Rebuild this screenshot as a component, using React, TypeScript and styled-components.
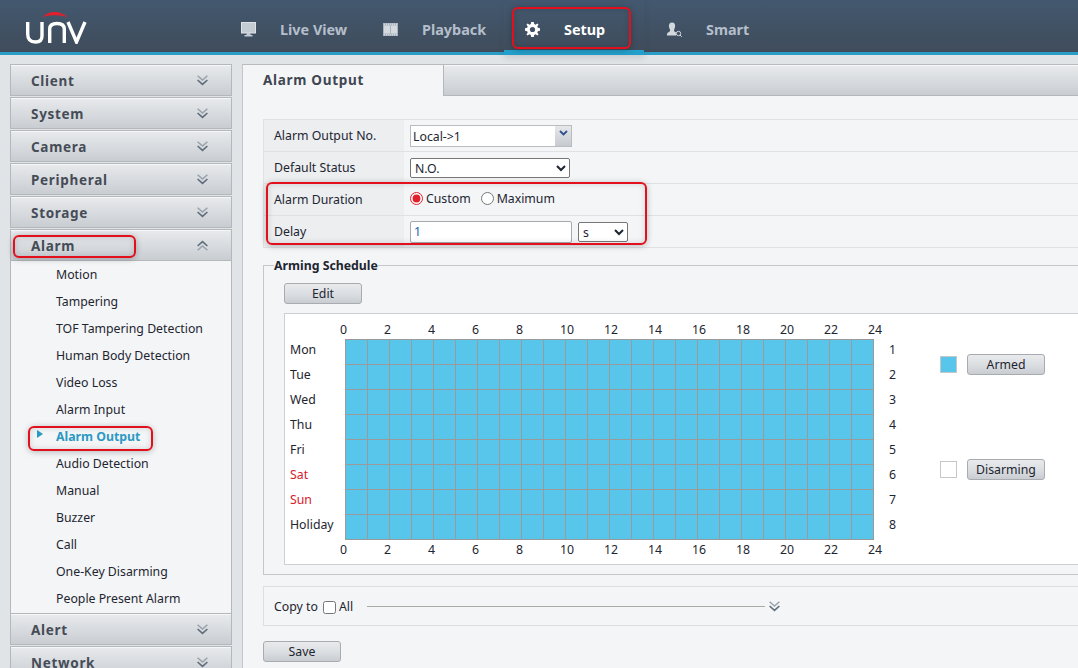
import React from "react";
import styled, { createGlobalStyle } from "styled-components";

const FONT = `"Noto Sans", "Open Sans", "Liberation Sans", sans-serif`;

const GlobalStyle = createGlobalStyle`
  html, body {
    margin: 0;
    padding: 0;
    height: 668px;
    overflow: hidden;
    background: #e1e4e7;
    font-family: ${FONT};
    font-size: 12.3px;
    color: #1d2530;
  }
  * { box-sizing: border-box; }
`;

const sections = ["Client", "System", "Camera", "Peripheral", "Storage"];
const alarmItems = [
  "Motion",
  "Tampering",
  "TOF Tampering Detection",
  "Human Body Detection",
  "Video Loss",
  "Alarm Input",
  "Alarm Output",
  "Audio Detection",
  "Manual",
  "Buzzer",
  "Call",
  "One-Key Disarming",
  "People Present Alarm",
];
const days = ["Mon", "Tue", "Wed", "Thu", "Fri", "Sat", "Sun", "Holiday"];
const hours = Array.from({ length: 13 }, (_, i) => i * 2);

const Logo = () => (
  <svg width="64" height="34" viewBox="0 0 64 34" fill="none">
    <path d="M17 7.500C23 0 36 0 43 7.500C36 4.500 23 4.500 17 7.500Z" fill="#e0202c" />
    <path d="M2.700 12V24C2.700 30 6 32 10.500 32C14.500 32 17 30.500 17 26V12" stroke="#fff" strokeWidth="3.400" />
    <path d="M24.700 33V19C24.700 15 28 13.500 32 13.500C36 13.500 39.300 15 39.300 19V33" stroke="#fff" strokeWidth="3.400" />
    <path d="M43 12L51.500 32L60 12" stroke="#fff" strokeWidth="3.400" />
  </svg>
);

const MonitorIcon = () => (
  <svg width="15" height="15" viewBox="0 0 15 15">
    <rect x="0.500" y="0.500" width="14" height="10.500" fill="#c3cbd3" stroke="#dfe3e7" />
    <rect x="5.500" y="11" width="4" height="2" fill="#c3cbd3" />
    <rect x="3.500" y="13" width="8" height="1.500" fill="#c3cbd3" />
  </svg>
);

const FilmIcon = () => (
  <svg width="15" height="13" viewBox="0 0 15 13">
    <rect width="15" height="13" fill="#aab4bf" />
    <rect x="1" y="2.500" width="6" height="8" fill="#d5dade" />
    <rect x="8" y="2.500" width="6" height="8" fill="#d5dade" />
    <path d="M1 1.200H14M1 11.800H14" stroke="#e3e6e9" strokeDasharray="1 1" />
  </svg>
);

const GearIcon = () => (
  <svg width="15" height="15" viewBox="0 0 15 15">
    <path
      d="M6.200 0H8.800L9.200 2.100L10.600 2.700L12.400 1.500L13.500 2.600L12.300 4.400L12.900 5.800L15 6.200V8.800L12.900 9.200L12.300 10.600L13.500 12.400L12.400 13.500L10.600 12.300L9.200 12.900L8.800 15H6.200L5.800 12.900L4.400 12.300L2.600 13.500L1.500 12.400L2.700 10.600L2.100 9.200L0 8.800V6.200L2.100 5.800L2.700 4.400L1.500 2.600L2.600 1.500L4.400 2.700L5.800 2.100Z"
      fill="#fff"
    />
    <circle cx="7.500" cy="7.500" r="2.600" fill="#425264" />
  </svg>
);

const SmartIcon = () => (
  <svg width="15" height="15" viewBox="0 0 15 15">
    <path d="M5 0.500C7.500 0.500 8.500 2.500 8 5C7.700 6.500 7 7.500 7 8.500C7 9.500 8.500 10 9 10.500V13.500H0V12C0 10.500 3 10 3.200 8.500C3.200 7.500 2.300 6.500 2 5C1.600 2.500 2.700 0.500 5 0.500Z" fill="#d3d8dd" />
    <circle cx="11.500" cy="11.500" r="2.200" fill="none" stroke="#d3d8dd" />
    <path d="M13 13L14.800 14.800" stroke="#d3d8dd" />
  </svg>
);

const Chevrons = ({ up }: { up?: boolean }) => (
  <svg width="11" height="11" viewBox="0 0 11 11" fill="none" style={{ transform: up ? "rotate(180deg)" : undefined }}>
    <path d="M0.600 0.800L5.500 5L10.400 0.800" stroke="#98a2ad" strokeWidth="1.500" />
    <path d="M0.600 5L5.500 9.400L10.400 5" stroke="#5f6c7a" strokeWidth="1.600" />
  </svg>
);

const App = () => {
  return (
    <Page>
      <GlobalStyle />
      <Header>
        <LogoBox>
          <Logo />
        </LogoBox>
        <Nav>
          <NavItem>
            <NavIcon>
              <MonitorIcon />
            </NavIcon>
            Live View
          </NavItem>
          <NavItem>
            <NavIcon>
              <FilmIcon />
            </NavIcon>
            Playback
          </NavItem>
          <NavItem $active>
            <NavIcon>
              <GearIcon />
            </NavIcon>
            Setup
          </NavItem>
          <NavItem>
            <NavIcon>
              <SmartIcon />
            </NavIcon>
            Smart
          </NavItem>
        </Nav>
      </Header>

      <Body>
        <Sidebar>
          {sections.map((s) => (
            <SideHead key={s}>
              {s}
              <Chevrons />
            </SideHead>
          ))}
          <SideHead $open>
            Alarm
            <Chevrons up />
          </SideHead>
          <SideList>
            {alarmItems.map((item) => (
              <SideItem key={item} $active={item === "Alarm Output"}>
                {item}
              </SideItem>
            ))}
          </SideList>
          <SideHead>
            Alert
            <Chevrons />
          </SideHead>
          <SideHead>
            Network
            <Chevrons />
          </SideHead>
        </Sidebar>

        <Main>
          <TabBar>
            <Tab>Alarm Output</Tab>
            <TabFill />
          </TabBar>

          <FormTable>
            <FormRow>
              <FormLabel>Alarm Output No.</FormLabel>
              <FormValue>
                <ComboBox>
                  <ComboText>Local-&gt;1</ComboText>
                  <ComboButton>
                    <svg width="9" height="6" viewBox="0 0 9 6">
                      <path d="M1 1L4.500 4.500L8 1" fill="none" stroke="#2f4f8f" strokeWidth="1.800" />
                    </svg>
                  </ComboButton>
                </ComboBox>
              </FormValue>
            </FormRow>
            <FormRow>
              <FormLabel>Default Status</FormLabel>
              <FormValue>
                <Select $width={160} defaultValue="N.O.">
                  <option>N.O.</option>
                  <option>N.C.</option>
                </Select>
              </FormValue>
            </FormRow>
            <FormRow>
              <FormLabel>Alarm Duration</FormLabel>
              <FormValue>
                <RadioLabel>
                  <Radio name="duration" defaultChecked />
                  Custom
                </RadioLabel>
                <RadioLabel>
                  <Radio name="duration" />
                  Maximum
                </RadioLabel>
              </FormValue>
            </FormRow>
            <FormRow>
              <FormLabel>Delay</FormLabel>
              <FormValue>
                <DelayInput defaultValue="1" />
                <Select $width={50} defaultValue="s">
                  <option>s</option>
                  <option>min</option>
                </Select>
              </FormValue>
            </FormRow>
          </FormTable>

          <Schedule>
            <ScheduleLegend>Arming Schedule</ScheduleLegend>
            <GrayButton>Edit</GrayButton>
            <ScheduleCard>
              <HourRow>
                {hours.map((h) => (
                  <Hour key={h}>{h}</Hour>
                ))}
              </HourRow>
              <ChartRow>
                <DayColumn>
                  {days.map((d) => (
                    <DayLabel key={d} $weekend={d === "Sat" || d === "Sun"}>
                      {d}
                    </DayLabel>
                  ))}
                </DayColumn>
                <Chart>
                  {Array.from({ length: 192 }, (_, i) => (
                    <Cell key={i} />
                  ))}
                </Chart>
                <NumberColumn>
                  {days.map((d, i) => (
                    <DayLabel key={d}>{i + 1}</DayLabel>
                  ))}
                </NumberColumn>
                <LegendColumn>
                  <LegendRow>
                    <Swatch $armed />
                    <GrayButton>Armed</GrayButton>
                  </LegendRow>
                  <LegendRow>
                    <Swatch />
                    <GrayButton>Disarming</GrayButton>
                  </LegendRow>
                </LegendColumn>
              </ChartRow>
              <HourRow>
                {hours.map((h) => (
                  <Hour key={h}>{h}</Hour>
                ))}
              </HourRow>
            </ScheduleCard>
          </Schedule>

          <CopyBar>
            Copy to
            <CopyCheck type="checkbox" />
            <span>All</span>
            <CopyLine />
            <Chevrons />
          </CopyBar>

          <SaveRow>
            <GrayButton>Save</GrayButton>
          </SaveRow>
        </Main>
      </Body>

      <Callout $x={512} $y={7} $w={119} $h={42} />
      <Callout $x={13} $y={235} $w={123} $h={23} />
      <Callout $x={28} $y={426} $w={125} $h={25} />
      <Callout $x={266} $y={182} $w={381} $h={63} />
    </Page>
  );
};

export default App;

const Page = styled.div`
  position: relative;
  width: 1078px;
  height: 668px;
  overflow: hidden;
`;

const Header = styled.header`
  height: 55px;
  display: flex;
  background: linear-gradient(#43586f, #3f4c5b);
  border-bottom: 3px solid #2b9dc6;
`;

const LogoBox = styled.div`
  width: 220px;
  padding: 10px 0 0 25px;
`;

const Nav = styled.nav`
  display: flex;
  gap: 2px;
`;

const NavItem = styled.div<{ $active?: boolean }>`
  width: 140px;
  height: 55px;
  padding: ${(p) => (p.$active ? "8px 0 0 21px" : "6px 0 3px 21px")};
  display: flex;
  align-items: center;
  font-size: 14.4px;
  font-weight: 700;
  color: ${(p) => (p.$active ? "#ffffff" : "#b4bfcb")};
  border-bottom: ${(p) => (p.$active ? "5px solid #239fcb" : "none")};
  box-shadow: ${(p) => (p.$active ? "0 3px 6px rgba(60, 70, 80, 0.15)" : "none")};
`;

const NavIcon = styled.span`
  width: 39px;
  display: flex;
  align-items: center;
`;

const Body = styled.div`
  display: flex;
  gap: 10px;
  padding: 9px 0 0 10px;
`;

const Sidebar = styled.aside`
  width: 222px;
  flex-shrink: 0;
`;

const SideHead = styled.div<{ $open?: boolean }>`
  height: 32px;
  margin-bottom: ${(p) => (p.$open ? "0" : "1px")};
  padding: 1px 23px 0 20px;
  display: flex;
  align-items: center;
  justify-content: space-between;
  font-size: 13.5px;
  font-weight: 700;
  letter-spacing: 0.7px;
  color: #454c57;
  border: 1px solid #b4b8bb;
  box-shadow: inset 0 1px 0 #f6f7f8;
  background: linear-gradient(#e8eaec, #c9cdd2);
`;

const SideList = styled.div`
  height: 352px;
  background: #f4f5f7;
  border-left: 1px solid #b4b8bb;
  border-right: 1px solid #b4b8bb;
`;

const SideItem = styled.div<{ $active?: boolean }>`
  position: relative;
  height: 27px;
  padding-left: 45px;
  display: flex;
  align-items: center;
  font-weight: ${(p) => (p.$active ? 700 : 400)};
  color: ${(p) => (p.$active ? "#2b99c4" : "#1d2530")};

  &::before {
    content: "";
    display: ${(p) => (p.$active ? "block" : "none")};
    position: absolute;
    left: 26px;
    top: 7px;
    border-left: 6px solid #2b99c4;
    border-top: 4.5px solid transparent;
    border-bottom: 4.5px solid transparent;
  }
`;

const Main = styled.main`
  flex: 1;
  min-width: 0;
  height: 610px;
  background: #f4f5f7;
  border-left: 1px solid #c4c7ca;
  border-top: 1px solid #b8bbbe;
  overflow: hidden;
`;

const TabBar = styled.div`
  display: flex;
  height: 31px;
`;

const Tab = styled.div`
  width: 200px;
  padding: 0 0 2px 20px;
  display: flex;
  align-items: center;
  font-size: 13.5px;
  font-weight: 700;
  letter-spacing: 0.7px;
  color: #3f4651;
`;

const TabFill = styled.div`
  flex: 1;
  border-left: 1px solid #b4b8bb;
  border-bottom: 1px solid #b4b8bb;
  box-shadow: inset 0 1px 0 #f6f7f8;
  background: linear-gradient(#e8eaec, #c9cdd2);
`;

const FormTable = styled.div`
  margin: 23px 0 0 20px;
  border-top: 1px solid #dfe1e3;
  border-left: 1px solid #dfe1e3;
`;

const FormRow = styled.div`
  height: 32px;
  display: flex;
  border-bottom: 1px solid #dfe1e3;
`;

const FormLabel = styled.div`
  width: 140px;
  padding-left: 10px;
  display: flex;
  align-items: center;
  background: #eceef0;
`;

const FormValue = styled.div`
  flex: 1;
  padding-left: 6px;
  display: flex;
  align-items: center;
  gap: 6px;
`;

const ComboBox = styled.div`
  width: 162px;
  height: 22px;
  display: flex;
  border: 1px solid #b9bdc2;
  background: #fff;
`;

const ComboText = styled.div`
  flex: 1;
  padding-left: 2px;
  line-height: 21px;
`;

const ComboButton = styled.div`
  width: 16px;
  display: flex;
  align-items: center;
  justify-content: center;
  padding-bottom: 5px;
  background: linear-gradient(#e6e8ea, #c6cacf);
`;

const Select = styled.select<{ $width: number }>`
  width: ${(p) => p.$width}px;
  height: 20px;
  font-family: ${FONT};
  font-size: 12.3px;
  color: #1d2530;
  background: #fff;
  border: 1px solid #767676;
  border-radius: 2px;
`;

const RadioLabel = styled.label`
  display: flex;
  align-items: center;
  gap: 3px;
  margin-right: 4px;
  padding-bottom: 2px;
`;

const Radio = styled.input.attrs({ type: "radio" })`
  width: 13px;
  height: 13px;
  margin: 0;
  accent-color: #e0202c;
`;

const DelayInput = styled.input`
  width: 162px;
  height: 22px;
  padding: 0 3px;
  font-family: ${FONT};
  font-size: 12.3px;
  color: #1c5fb0;
  background: #fff;
  border: 1px solid #a6a9ad;
  border-radius: 2px;
  outline: none;
`;

const Schedule = styled.fieldset`
  margin: 9px 0 0 20px;
  padding: 9px 0 0 20px;
  width: 860px;
  height: 318px;
  border: 1px solid #c5c8cb;
`;

const ScheduleLegend = styled.legend`
  margin-left: -10px;
  padding: 0;
  font-size: 12.3px;
  line-height: 17px;
  font-weight: 700;
  color: #1d2530;
`;

const GrayButton = styled.button`
  width: 78px;
  height: 21px;
  padding: 0;
  font-family: ${FONT};
  font-size: 12.3px;
  color: #1d2530;
  border: 1px solid #a8abaf;
  border-radius: 3px;
  background: linear-gradient(#e8eaec 0%, #dcdfe2 50%, #c9cdd2 100%);
`;

const ScheduleCard = styled.div`
  width: 830px;
  height: 252px;
  margin-top: 9px;
  padding-top: 7px;
  background: #fff;
  border: 1px solid #cdd0d3;
`;

const HourRow = styled.div`
  display: flex;
  margin-left: 55px;
  height: 17px;
`;

const Hour = styled.div`
  width: 44px;
  line-height: 17px;
`;

const ChartRow = styled.div`
  display: flex;
  height: 201px;
  margin: 1px 0;
`;

const DayColumn = styled.div`
  width: 60px;
  padding-left: 5px;
`;

const DayLabel = styled.div<{ $weekend?: boolean }>`
  height: 25px;
  line-height: 21px;
  color: ${(p) => (p.$weekend ? "#d8202c" : "#1d2530")};
`;

const Chart = styled.div`
  width: 529px;
  height: 201px;
  display: grid;
  grid-template-columns: repeat(24, 22px);
  grid-template-rows: repeat(8, 25px);
  background: #58c6ea;
  border-left: 1px solid #9a9a9a;
  border-top: 1px solid #9a9a9a;
`;

const Cell = styled.div`
  border-right: 1px solid #9a9a9a;
  border-bottom: 1px solid #9a9a9a;
`;

const NumberColumn = styled.div`
  width: 66px;
  padding-left: 15px;
`;

const LegendColumn = styled.div`
  padding-top: 15px;
  display: flex;
  flex-direction: column;
  gap: 84px;
`;

const LegendRow = styled.div`
  display: flex;
  align-items: center;
  gap: 10px;
`;

const Swatch = styled.div<{ $armed?: boolean }>`
  width: 17px;
  height: 17px;
  background: ${(p) => (p.$armed ? "#58c6ea" : "#fff")};
  border: 1px solid #c5c8cb;
`;

const CopyBar = styled.div`
  margin: 11px 0 0 20px;
  height: 40px;
  padding-left: 10px;
  display: flex;
  align-items: center;
  border-top: 1px solid #dcdee0;
  border-bottom: 1px solid #dcdee0;
  border-left: 1px solid #dcdee0;
`;

const CopyCheck = styled.input`
  width: 13px;
  height: 13px;
  margin: 2px 3px 0 5px;
`;

const CopyLine = styled.div`
  width: 398px;
  height: 1px;
  margin: 0 4px 0 14px;
  background: #aaa9a6;
`;

const SaveRow = styled.div`
  margin: 15px 0 0 20px;
`;

const Callout = styled.div<{ $x: number; $y: number; $w: number; $h: number }>`
  position: absolute;
  left: ${(p) => p.$x}px;
  top: ${(p) => p.$y}px;
  width: ${(p) => p.$w}px;
  height: ${(p) => p.$h}px;
  border: 2px solid #e2101c;
  border-radius: 6px;
  box-shadow: 0 1px 6px rgba(0, 0, 0, 0.25), inset 0 0 6px rgba(0, 0, 0, 0.14);
  pointer-events: none;
`;
